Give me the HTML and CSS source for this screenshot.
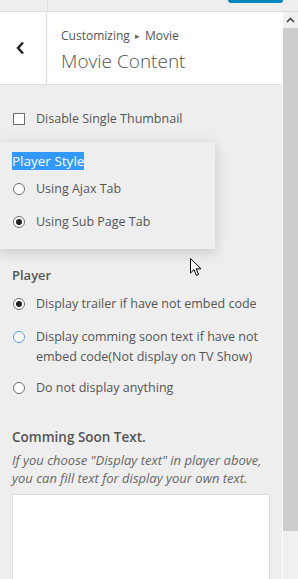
FILE: index.html
```html
<!DOCTYPE html>
<html lang="en">
<head>
  <meta charset="UTF-8">
  <title>Movie Content</title>
  <link rel="stylesheet" href="styles.css">
</head>
<body>
  <div class="frame">
    <div class="topbar">
      <div class="topbar-close"></div>
      <div class="publish-btn"></div>
    </div>

    <div class="main">
      <div class="panel">
        <div class="panel-head">
          <div class="back-btn">
            <svg width="10" height="14" viewBox="0 0 10 14"><polyline points="7,1.5 2,7 7,12.5" fill="none" stroke="#222" stroke-width="2.4"/></svg>
          </div>
          <div class="head-title">
            <span class="crumb">Customizing <span class="crumb-sep">&#9656;</span> Movie</span>
            <h3>Movie Content</h3>
          </div>
        </div>

        <div class="controls">
          <label class="opt"><span class="checkbox"></span>Disable Single Thumbnail</label>

          <div class="popup">
            <div class="popup-title"><span class="selected">Player Style</span></div>
            <label class="opt"><span class="radio"></span>Using Ajax Tab</label>
            <label class="opt"><span class="radio checked"></span>Using Sub Page Tab</label>
          </div>

          <div class="group">
            <div class="group-title">Player</div>
            <label class="opt"><span class="radio checked"></span>Display trailer if have not embed code</label>
            <label class="opt tight"><span class="radio focus"></span>Display comming soon text if have not embed code(Not display on TV Show)</label>
            <label class="opt"><span class="radio"></span>Do not display anything</label>
          </div>

          <div class="group soon">
            <div class="group-title big">Comming Soon Text.</div>
            <div class="desc">If you choose "Display text" in player above, you can fill text for display your own text.</div>
            <div class="textarea"></div>
          </div>
        </div>
      </div>

      <div class="scrollbar">
        <div class="scroll-up">
          <svg width="9" height="6" viewBox="0 0 9 6"><polyline points="1,5 4.5,1.5 8,5" fill="none" stroke="#444" stroke-width="1.6"/></svg>
        </div>
        <div class="scroll-thumb"></div>
        <div class="scroll-track"></div>
      </div>
    </div>

    <svg class="cursor" width="12" height="19" viewBox="0 0 12 19"><path d="M0.5 0.5 L0.5 15 L4 11.6 L6.4 17.4 L8.6 16.5 L6.2 10.8 L11 10.8 Z" fill="#fff" stroke="#000" stroke-width="1"/></svg>
  </div>
</body>
</html>
```

FILE: styles.css
```css
body {
  margin: 0;
  font-family: "Open Sans", "Noto Sans", sans-serif;
  color: #555;
}
.frame {
  position: relative;
  width: 298px;
  height: 579px;
  overflow: hidden;
  background: #eee;
}
.topbar {
  display: flex;
  height: 11px;
  background: #eee;
  border-bottom: 1px solid #ddd;
}
.topbar-close {
  width: 47px;
  border-right: 1px solid #ddd;
}
.publish-btn {
  margin-left: auto;
  margin-right: 15px;
  width: 55px;
  height: 3px;
  background: #0085ba;
  border-radius: 0 0 3px 3px;
}
.main {
  display: flex;
  height: 567px;
}
.panel {
  flex: 1;
  min-width: 0;
}
.panel-head {
  display: flex;
  height: 72px;
  background: #fff;
  border-bottom: 1px solid #ddd;
}
.back-btn {
  width: 47px;
  border-right: 1px solid #ddd;
  display: flex;
  align-items: center;
  justify-content: center;
  padding-right: 4px;
  box-sizing: border-box;
}
.head-title {
  padding: 15px 0 0 14px;
}
.crumb {
  display: block;
  font-size: 12px;
  line-height: 18px;
  color: #555;
}
.crumb-sep {
  font-size: 9px;
  color: #666;
  margin: 0 2px;
  vertical-align: 1px;
}
.head-title h3 {
  margin: 4px 0 0;
  font-size: 19px;
  font-weight: 300;
  line-height: 24px;
  color: #555;
}
.controls {
  padding: 24px 0 0 12px;
}
.opt {
  display: flex;
  align-items: flex-start;
  font-size: 12.5px;
  line-height: 20px;
  color: #555;
  margin-bottom: 13px;
}
.opt.tight {
  margin-bottom: 11px;
}
.checkbox, .radio {
  flex: none;
  width: 12px;
  height: 12px;
  margin: 4px 11px 0 1px;
  border: 1px solid #6e6e6e;
  background: #fff;
  box-sizing: border-box;
}
.radio {
  border-radius: 50%;
  position: relative;
}
.radio.checked::after {
  content: "";
  position: absolute;
  left: 2px;
  top: 2px;
  width: 6px;
  height: 6px;
  border-radius: 50%;
  background: #222;
}
.radio.focus {
  border-color: #5b9dd9;
}
.popup {
  width: 215px;
  margin: 7px 0 0 -12px;
  padding: 9px 0 17px 12px;
  box-sizing: border-box;
  background: #eee;
  box-shadow: 0 3px 12px rgba(0, 0, 0, 0.18);
}
.popup-title {
  font-size: 13.5px;
  line-height: 20px;
  margin-bottom: 8px;
}
.selected {
  background: #3399ff;
  color: #fff;
}
.popup .opt:last-child {
  margin-bottom: 0;
}
.group {
  margin-top: 16px;
}
.group-title {
  font-size: 13px;
  font-weight: 600;
  line-height: 20px;
  margin-bottom: 9px;
}
.soon {
  margin-top: 29px;
}
.group-title.big {
  font-size: 13.5px;
  margin-bottom: 4px;
}
.desc {
  font-size: 13px;
  font-style: italic;
  line-height: 18px;
  color: #666;
  padding-right: 12px;
  margin-bottom: 7px;
}
.textarea {
  width: 258px;
  height: 120px;
  background: #fff;
  border: 1px solid #ddd;
  box-sizing: border-box;
}
.scrollbar {
  width: 15px;
  border-left: 1px solid #fff;
  display: flex;
  flex-direction: column;
  background: #f0f0f0;
}
.scroll-up {
  height: 16px;
  display: flex;
  align-items: center;
  justify-content: center;
}
.scroll-thumb {
  height: 503px;
  background: #cdcdcd;
}
.scroll-track {
  flex: 1;
}
.cursor {
  position: absolute;
  left: 190px;
  top: 258px;
}
```
